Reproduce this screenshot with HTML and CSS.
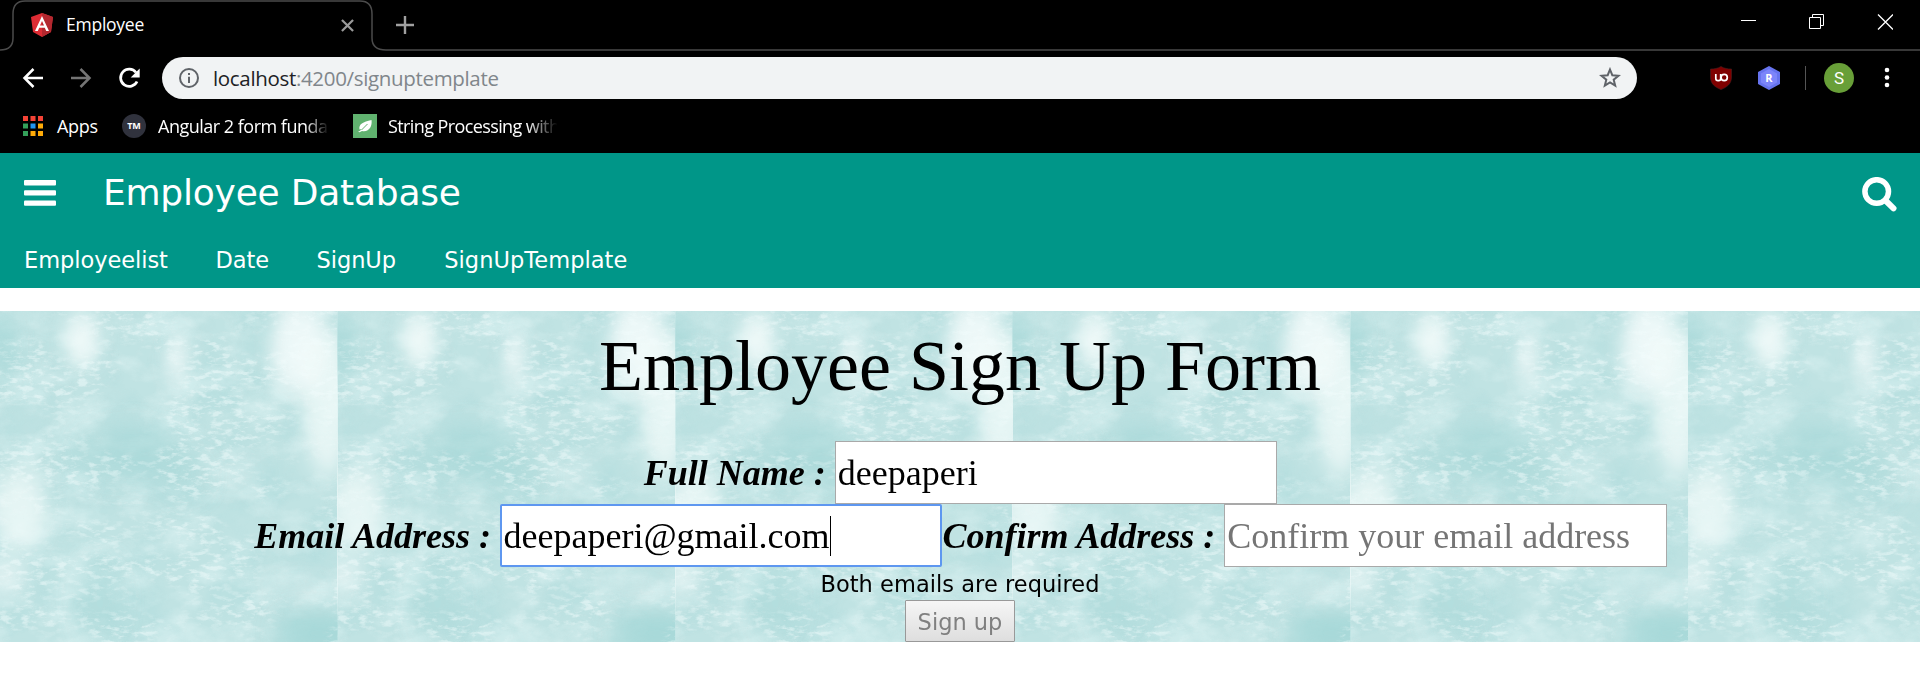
FILE: index.html
```html
<!DOCTYPE html>
<html lang="en">
<head>
<meta charset="utf-8">
<title>Employee</title>
<link rel="stylesheet" href="styles.css">
</head>
<body>
<header class="browser">
  <div class="tabstrip">
    <svg class="tab-outline" viewBox="0 0 1920 52" fill="none" stroke="#4b4b4b" stroke-width="1.5"><path d="M0 50C8 50 13 46 13 38V14C13 6 17 1 25 1H360C368 1 372 6 372 14V38C372 46 377 50 386 50H1920"/></svg>
    <div class="tab">
      <svg class="favicon" viewBox="0 0 24 24"><path fill="#dd2c34" d="M12 0 23 4 21 19 12 24 3 19 1 4Z"/><path fill="#b3282f" d="M12 0 23 4 21 19 12 24Z"/><path fill="#fff" fill-rule="evenodd" d="M12 3 5 18H7.8L9.2 14.7H14.8L16.2 18H19ZM12 8 14 12.500H10Z"/></svg>
      <span class="tab-title">Employee</span>
      <svg class="tab-close" viewBox="0 0 14 14" stroke="#9a9a9a" stroke-width="2.4"><path d="M1 1 13 13M13 1 1 13"/></svg>
    </div>
    <svg class="new-tab" viewBox="0 0 18 18" stroke="#a0a0a0" stroke-width="2.4"><path d="M0 9H18M9 0V18"/></svg>
    <svg class="window-buttons" viewBox="0 0 152 16" fill="none" stroke="#fff"><path d="M0 6.500H15"/><path d="M68.500 3.500H79.500V14.500H68.500ZM71.500 3.500V.5H82.500V11.500H79.500"/><path stroke-width="1.300" d="M137 .5 152 15.500M152 .5 137 15.500"/></svg>
  </div>
  <div class="toolbar">
    <svg class="nav-icons" viewBox="0 0 118 24" fill="none" stroke-width="2.500"><path stroke="#fff" d="M21 12H2.500M11.500 3 2.500 12 11.500 21"/><path stroke="#757575" d="M49 12H67.500M58.500 3 67.500 12 58.500 21"/><path stroke="#fff" stroke-width="2.700" d="M114 6.500A8.600 8.600 0 1 0 115 15.500"/><path fill="#fff" d="M117.700 2.500V11.500H108.700Z"/></svg>
    <div class="address">
      <svg class="info" viewBox="0 0 20 20"><circle cx="10" cy="10" r="9" fill="none" stroke="#5f6368" stroke-width="2"/><path fill="#5f6368" d="M9 5h2v2H9zM9 8.700h2V15H9z"/></svg>
      <span class="url"><b>localhost</b>:4200/signuptemplate</span>
      <svg class="star" viewBox="0 0 22 22"><path fill="none" stroke="#5f6368" stroke-width="2" d="M11 2.500 13.300 8.200 19.500 8.700 14.700 12.700 16.200 18.700 11 15.500 5.800 18.700 7.300 12.700 2.500 8.700 8.700 8.200Z"/></svg>
    </div>
    <svg class="ext ublock" viewBox="0 0 22 24"><path fill="#800000" stroke="#4a2020" stroke-width=".6" d="M11 .5C14 2.500 18 3 21.500 3V11C21.500 18 17 21 11 23.600 5 21 .5 18 .5 11V3C4 3 8 2.500 11 .5Z"/><g fill="none" stroke="#fff" stroke-width="1.700"><path d="M5.800 8V12.500Q5.800 14.700 8 14.700H8.700Q10.700 14.700 10.700 12.500V8"/><circle cx="14.200" cy="11.500" r="3.100"/></g></svg>
    <svg class="ext hex" viewBox="0 0 22 24"><path fill="#6673ee" d="M11 0 22 6V18L11 24 0 18V6Z"/><path fill="#7c85fa" d="M11 3 19 7.500V16.500L11 21 3 16.500V7.500Z"/><text class="hex-letter" x="11" y="16.200">R</text></svg>
    <span class="separator"></span>
    <span class="avatar">S</span>
    <svg class="dots" viewBox="0 0 6 22" fill="#fff"><circle cx="3" cy="3" r="2.300"/><circle cx="3" cy="10.500" r="2.300"/><circle cx="3" cy="18" r="2.300"/></svg>
  </div>
  <div class="bookmarks">
    <svg class="apps" viewBox="0 0 20 20"><path fill="#f44336" d="M0 0h5v5H0zM7.500 0h5v5h-5zM15 0h5v5h-5z"/><path fill="#34a05a" d="M0 7.500h5v5H0zM0 15h5v5H0z"/><path fill="#2196f3" d="M7.500 7.500h5v5h-5z"/><path fill="#ffab08" d="M15 7.500h5v5h-5zM7.500 15h5v5h-5zM15 15h5v5h-5z"/></svg>
    <span class="bm bm-apps">Apps</span>
    <span class="tm">TM</span>
    <span class="bm bm-angular">Angular 2 form funda</span>
    <svg class="leaf" viewBox="0 0 24 24"><path fill="#60b26f" d="M0 0h24v24H0z"/><path fill="#fff" d="M18.500 6C19.500 12 16 18.500 9 17L6.500 18.300 5 17.800C7 17 8 16 8.500 15L6.500 15.500C5.500 10 10 8 18.500 6Z"/><path fill="none" stroke="#60b26f" stroke-width="1" d="M8.500 16C10.500 14 12.500 12 14.500 10"/></svg>
    <span class="bm bm-string">String Processing with</span>
  </div>
</header>

<div class="app-header">
  <div class="app-bar">
    <svg class="menu" viewBox="0 0 32 26" fill="#fff"><rect width="32" height="5.400" rx="1"/><rect y="10.200" width="32" height="5.400" rx="1"/><rect y="20.400" width="32" height="5.400" rx="1"/></svg>
    <span class="app-title">Employee Database</span>
    <svg class="search" viewBox="0 0 35 35" fill="none" stroke="#fff"><circle cx="14.700" cy="14.500" r="11.800" stroke-width="5.500"/><path d="M23.500 23.500 31.500 31.300" stroke-width="6" stroke-linecap="round"/></svg>
  </div>
  <nav class="links"><a>Employeelist</a><a>Date</a><a>SignUp</a><a>SignUpTemplate</a></nav>
</div>

<main class="signup">
  <svg class="texture" viewBox="0 0 1920 331" preserveAspectRatio="none">
    <defs>
      <filter id="soft" x="-80%" y="-80%" width="260%" height="260%"><feGaussianBlur stdDeviation="9 12"/></filter>
      <filter id="flecks" x="0" y="0" width="100%" height="100%" color-interpolation-filters="sRGB">
        <feTurbulence type="fractalNoise" baseFrequency=".09 .2" numOctaves="4" seed="8"/>
        <feColorMatrix values="0 0 0 0 .95  0 0 0 0 .99  0 0 0 0 .99  4 0 0 0 -1.900" result="fine"/>
        <feTurbulence type="fractalNoise" baseFrequency=".012 .022" numOctaves="2" seed="5"/>
        <feColorMatrix values="0 0 0 0 1  0 0 0 0 1  0 0 0 0 1  0 5 0 0 -2" result="patch"/>
        <feComposite in="fine" in2="patch" operator="in"/>
      </filter>
      <filter id="wash" x="0" y="0" width="100%" height="100%" color-interpolation-filters="sRGB"><feTurbulence type="fractalNoise" baseFrequency=".018 .02" numOctaves="5" seed="21"/><feColorMatrix values="0 0 0 0 .66  0 0 0 0 .85  0 0 0 0 .855  2.500 0 0 0 -1"/></filter>
      <filter id="pale" x="0" y="0" width="100%" height="100%" color-interpolation-filters="sRGB"><feTurbulence type="fractalNoise" baseFrequency=".02 .035" numOctaves="5" seed="34"/><feColorMatrix values="0 0 0 0 .88  0 0 0 0 .96  0 0 0 0 .96  0 3 0 0 -1.300"/></filter>
      <clipPath id="edge"><rect width="337.600" height="331"/></clipPath>
      <g id="tile" clip-path="url(#edge)">
        <rect width="338" height="331" fill="#c0e3e3"/>
        <rect width="338" height="331" filter="url(#wash)" opacity=".4"/>
        <rect width="338" height="331" filter="url(#pale)" opacity=".5"/>
        <g fill="#a4d7d7" filter="url(#soft)">
          <ellipse cx="130" cy="143" rx="55" ry="25" opacity=".55"/>
          <ellipse cx="185" cy="165" rx="25" ry="18" opacity=".45"/>
          <ellipse cx="100" cy="290" rx="25" ry="40" opacity=".45"/>
          <ellipse cx="5" cy="35" rx="9" ry="35" opacity=".8"/>
          <ellipse cx="320" cy="322" rx="48" ry="20" opacity=".9"/>
        </g>
        <g fill="#f4fcfb" filter="url(#soft)">
          <ellipse cx="82" cy="28" rx="17" ry="28" opacity=".9"/>
          <ellipse cx="177" cy="48" rx="11" ry="26" opacity=".85"/>
          <ellipse cx="298" cy="36" rx="27" ry="48" opacity=".85"/>
          <ellipse cx="328" cy="90" rx="25" ry="75" opacity=".75"/>
          <ellipse cx="20" cy="200" rx="28" ry="40" opacity=".75"/>
          <ellipse cx="5" cy="265" rx="22" ry="18" opacity=".6"/>
          <ellipse cx="235" cy="165" rx="28" ry="7" opacity=".35"/>
          <ellipse cx="298" cy="279" rx="32" ry="7" opacity=".5"/>
        </g>
        <rect width="338" height="331" filter="url(#flecks)" opacity=".5"/>
      </g>
    </defs>
    <use href="#tile"/><use href="#tile" x="337.600"/><use href="#tile" x="675.200"/><use href="#tile" x="1012.800"/><use href="#tile" x="1350.400"/><use href="#tile" x="1688"/>
  </svg>
  <h1 class="heading">Employee Sign Up Form</h1>
  <div class="row"><label class="lab">Full Name :</label><div class="field">deepaperi</div></div>
  <div class="row"><label class="lab">Email Address :</label><div class="field focused">deepaperi@gmail.com<i class="caret"></i></div><label class="lab">Confirm Address :</label><div class="field hint">Confirm your email address</div></div>
  <p class="message">Both emails are required</p>
  <button class="submit" disabled>Sign up</button>
</main>
</body>
</html>
```
FILE: styles.css
```css
* { box-sizing: border-box; }
body { margin: 0; width: 1920px; height: 697px; overflow: hidden; background: #fff; font-family: "DejaVu Sans", sans-serif; }
svg { display: block; flex: none; }
span, a { white-space: nowrap; flex: none; }

.browser { height: 153px; background: #000; color: #fff; font-family: "Open Sans", "Noto Sans", sans-serif; }
.tabstrip { position: relative; display: flex; height: 52px; }
.tab-outline { position: absolute; left: 0; top: 0; width: 1920px; height: 52px; }
.tab { display: flex; width: 354px; padding-left: 30px; }
.favicon { width: 24px; height: 24px; margin-top: 13px; }
.tab-title { width: 276px; padding-left: 12px; font-size: 17.500px; letter-spacing: -.25px; line-height: 49px; }
.tab-close { width: 13px; height: 13px; margin: 19px 0 0 11px; }
.new-tab { width: 18px; height: 18px; margin: 16px 0 0 42px; }
.window-buttons { width: 152px; height: 16px; margin: 14px 27px 0 auto; }

.toolbar { display: flex; align-items: center; height: 52px; }
.nav-icons { width: 118px; height: 24px; margin-left: 22px; }
.address { display: flex; align-items: center; width: 1475px; height: 42px; margin-left: 22px; padding: 0 16px 0 17px; background: #f1f3f4; border-radius: 21px; }
.info { width: 20px; height: 20px; }
.url { padding-left: 14px; color: #80868b; font-size: 20.500px; letter-spacing: -.33px; line-height: 42px; }
.url b { color: #202124; font-weight: 400; }
.star { width: 22px; height: 22px; margin-left: auto; }
.ext { width: 22px; height: 24px; }
.ublock { margin-left: 73px; }
.hex { margin-left: 26px; }
.hex-letter { fill: #fff; font: 700 11px "Open Sans", sans-serif; text-anchor: middle; }
.separator { width: 1px; height: 24px; margin-left: 25px; background: #555; }
.avatar { width: 30px; height: 30px; margin-left: 18px; border-radius: 50%; background: #689f38; font: 17px/30px Roboto, sans-serif; text-align: center; }
.dots { width: 6px; height: 22px; margin-left: 30px; }

.bookmarks { display: flex; align-items: center; height: 44px; padding-left: 23px; }
.apps { width: 20px; height: 20px; }
.bm { font-size: 18px; letter-spacing: -.4px; line-height: 40px; }
.bm-apps { width: 65px; margin-left: 14px; letter-spacing: -.3px; }
.tm { width: 24px; height: 24px; border-radius: 50%; background: #30323d; font: 700 9px/24px "Open Sans", sans-serif; text-align: center; }
.bm-angular { width: 171px; margin: 0 24px 0 12px; letter-spacing: -.5px; -webkit-mask-image: linear-gradient(90deg, #000 86%, transparent); mask-image: linear-gradient(90deg, #000 86%, transparent); }
.leaf { width: 24px; height: 24px; }
.bm-string { width: 173px; margin-left: 11px; letter-spacing: -.6px; -webkit-mask-image: linear-gradient(90deg, #000 80%, transparent 98%); mask-image: linear-gradient(90deg, #000 80%, transparent 98%); }

.app-header { height: 135px; padding: 0 23px; background: #009688; color: #fff; }
.app-bar { display: flex; height: 80px; }
.menu { width: 32px; height: 26px; margin: 27px 0 0 1px; }
.app-title { margin-left: 47px; font-size: 36px; letter-spacing: -.22px; line-height: 80px; }
.search { width: 35px; height: 35px; margin: 24px 0 0 auto; }
.links { display: flex; padding-left: 1px; font-size: 22.500px; letter-spacing: -.05px; line-height: 55px; }
.links a { margin-right: 47.500px; }
.links a:last-child { margin: 0 0 0 .7px; letter-spacing: .05px; }

.signup { position: relative; display: flex; flex-direction: column; align-items: center; height: 331px; margin-top: 23px; }
.texture { position: absolute; left: 0; top: 0; width: 1920px; height: 331px; z-index: -1; }
.heading { margin: 0; height: 130px; padding-top: 13.500px; font: 400 72px/82px "Liberation Serif", serif; white-space: nowrap; }
.row { display: flex; height: 63px; padding-left: 1px; font: 36px/62px "Liberation Serif", serif; white-space: nowrap; }
.lab { padding: 1px 9px 0 0; font-weight: 700; font-style: italic; }
.field { width: 442.500px; height: 63px; padding-left: 2px; border: 1px solid #a9a9a9; background: #fff; }
.focused { display: flex; align-items: center; padding: 1px 0 0 1.500px; border: 2px solid #5e97f0; border-radius: 2px; }
.caret { width: 1px; height: 40px; background: #000; }
.hint { color: #757575; }
.message { margin: 0; height: 33px; padding-top: 1px; font-size: 22.500px; letter-spacing: .04px; line-height: 33px; white-space: nowrap; }
.submit { width: 110px; height: 42px; padding: 1px 0 0; border: 1px solid #999; border-radius: 1px; background: linear-gradient(#f6f6f6, #dedede); color: #808080; font: 22.500px "DejaVu Sans", sans-serif; white-space: nowrap; }
```
